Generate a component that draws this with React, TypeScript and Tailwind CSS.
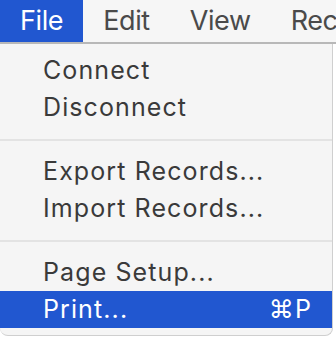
import React from 'react';

const topMenus = ['File', 'Edit', 'View', 'Records'];

const MenuItem: React.FC<{ label: string; shortcut?: string; active?: boolean }> = ({ label, shortcut, active }) => (
    <div
        className={`h-[37px] flex items-center justify-between pl-[43px] pr-[20px] ${
            active ? 'bg-[#2157d0] text-white' : 'text-[#3a3a3a]'
        }`}
    >
        <span>{label}</span>
        {shortcut && <span>{shortcut}</span>}
    </div>
);

const Separator: React.FC = () => (
    <div className="h-[27px] flex items-center">
        <div className="h-[2px] w-full bg-[#e3e3e3]" />
    </div>
);

const App: React.FC = () => {
    return (
        <div className="w-[336px] h-[337px] bg-white overflow-hidden font-['Inter',sans-serif]">
            {/* Menu bar */}
            <div className="h-[44px] bg-[#f6f6f6] border-b-2 border-[#b8b8b8] flex text-[27px] tracking-[-0.4px] text-[#4a4a4a] whitespace-nowrap overflow-hidden">
                {topMenus.map((m, i) => (
                    <div
                        key={m}
                        className={`px-[20px] shrink-0 flex items-center ${i === 0 ? 'bg-[#2157d0] text-white' : ''}`}
                    >
                        {m}
                    </div>
                ))}
            </div>

            {/* Dropdown */}
            <div className="w-[333px] bg-[#f5f5f5] border-r border-b border-[#cfcfcf] rounded-b-[8px] pt-[8px] pb-[7px] text-[25px] tracking-[1.1px] overflow-hidden">
                <MenuItem label="Connect" />
                <MenuItem label="Disconnect" />
                <Separator />
                <MenuItem label="Export Records..." />
                <MenuItem label="Import Records..." />
                <Separator />
                <MenuItem label="Page Setup..." />
                <MenuItem label="Print..." shortcut="⌘P" active />
            </div>
        </div>
    );
};

export default App;
